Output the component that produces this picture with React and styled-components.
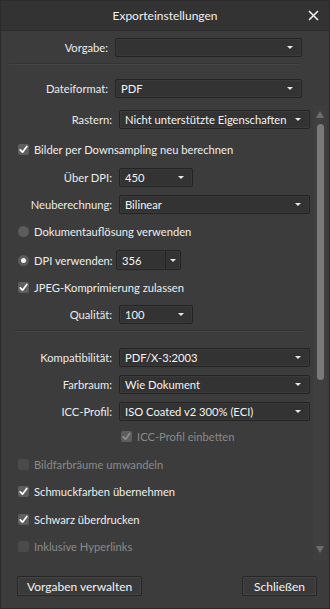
import React from 'react';
import styled, { createGlobalStyle } from 'styled-components';

const Global = createGlobalStyle`
  html, body {
    margin: 0;
    padding: 0;
    background: #3c3c3c;
  }
  body {
    font-family: Lato, "Liberation Sans", sans-serif;
    font-size: 11.2px;
    color: #ededed;
  }
`;

const Window = styled.div`
  width: 330px;
  height: 609px;
  box-sizing: border-box;
  background: #3c3c3c;
  border: 1px solid #2b2b2b;
  display: flex;
  flex-direction: column;
  overflow: hidden;
`;

const TitleBar = styled.div`
  height: 29px;
  flex: none;
  background: #333333;
  border-bottom: 1px solid #2c2c2c;
  position: relative;
  display: flex;
  align-items: center;
  justify-content: center;
  font-size: 12px;
  color: #f0f0f0;
`;

const Close = styled.div`
  position: absolute;
  right: 10px;
  top: 9px;
  width: 11px;
  height: 11px;
  display: flex;
`;

const Top = styled.div`
  flex: none;
  padding: 7px 0 0 0;
  display: flex;
  flex-direction: column;
`;

const Row = styled.div`
  display: grid;
  grid-template-columns: ${p => p.$label}px auto;
  column-gap: 7px;
  align-items: center;
  height: ${p => p.$h || 28}px;
  margin-top: ${p => p.$mt || 0}px;
`;

const Label = styled.div`
  text-align: right;
  white-space: nowrap;
  color: #ebebeb;
`;

const Select = styled.div`
  width: ${p => p.$w}px;
  height: 19px;
  box-sizing: border-box;
  background: #333333;
  border: 1px solid #232323;
  box-shadow: inset 0 0 0 1px #3a3a3a;
  border-radius: 2px;
  display: flex;
  align-items: center;
  padding: 0 8px 0 5px;
  color: #f4f4f4;
  white-space: nowrap;
`;

const Value = styled.span`
  flex: 1;
  overflow: hidden;
`;

const Caret = styled.span`
  width: 0;
  height: 0;
  border-left: 3px solid transparent;
  border-right: 3px solid transparent;
  border-top: 3px solid #e8e8e8;
`;

const Rule = styled.div`
  height: 1px;
  background: #333333;
  border-bottom: 1px solid #444444;
  margin: ${p => p.$m};
`;

const ScrollArea = styled.div`
  flex: none;
  height: 454px;
  margin-top: 8px;
  display: flex;
  overflow: hidden;
`;

const Content = styled.div`
  flex: 1;
  display: flex;
  flex-direction: column;
`;

const ScrollBar = styled.div`
  width: 14px;
  margin-right: 2px;
  background: #3f3f3f;
  display: flex;
  flex-direction: column;
  align-items: center;
  padding-top: 5px;
`;

const Arrow = styled.span`
  width: 0;
  height: 0;
  border-left: 4px solid transparent;
  border-right: 4px solid transparent;
  ${p => (p.$up ? 'border-bottom: 7px solid #6e6e6e;' : 'border-top: 7px solid #6e6e6e;')}
  margin-top: ${p => p.$mt || 0}px;
`;

const Thumb = styled.div`
  width: 7px;
  height: 256px;
  margin-top: 6px;
  background: #7a7a7a;
  border-radius: 4px;
`;

const CheckRow = styled.div`
  display: flex;
  align-items: center;
  gap: 5px;
  height: ${p => p.$h || 28}px;
  margin-top: ${p => p.$mt || 0}px;
  padding-left: ${p => p.$pl || 17}px;
  color: ${p => (p.$disabled ? '#8a8a8a' : '#ededed')};
  white-space: nowrap;
`;

const Box = styled.span`
  width: 11px;
  height: 11px;
  flex: none;
  border-radius: 2px;
  background: ${p => (p.$disabled ? '#4a4a4a' : '#5e5e5e')};
  display: flex;
  align-items: center;
  justify-content: center;
`;

const Radio = styled.span`
  width: 11px;
  height: 11px;
  flex: none;
  border-radius: 50%;
  background: #5c5c5c;
  display: flex;
  align-items: center;
  justify-content: center;
  &::after {
    content: '';
    display: ${p => (p.$on ? 'block' : 'none')};
    width: 5px;
    height: 5px;
    border-radius: 50%;
    background: #f4f4f4;
  }
`;

const RadioValueRow = styled.div`
  display: grid;
  grid-template-columns: 115px auto;
  align-items: center;
  height: 28px;
  margin-top: 3px;
`;

const RadioLabel = styled.div`
  display: flex;
  align-items: center;
  gap: 5px;
  padding-left: 17px;
  white-space: nowrap;
`;

const Spin = styled.div`
  width: 65px;
  height: 20px;
  box-sizing: border-box;
  background: #333333;
  border: 1px solid #232323;
  box-shadow: inset 0 0 0 1px #3a3a3a;
  border-radius: 2px;
  display: flex;
  color: #f4f4f4;
`;

const SpinValue = styled.div`
  flex: 1;
  display: flex;
  align-items: center;
  padding-left: 5px;
  border-right: 1px solid #242424;
`;

const SpinButton = styled.div`
  width: 14px;
  display: flex;
  align-items: center;
  justify-content: center;
`;

const Footer = styled.div`
  flex: 1;
  display: flex;
  justify-content: space-between;
  align-items: flex-start;
  padding: 16px 12px 0 16px;
`;

const Button = styled.div`
  height: 20px;
  box-sizing: border-box;
  padding: 0 ${p => p.$px}px;
  background: #3a3a3a;
  border: 1px solid #262626;
  box-shadow: inset 0 0 0 1px #444;
  border-radius: 2px;
  display: flex;
  align-items: center;
  font-size: 12px;
  color: #f4f4f4;
`;

const Check = ({ disabled }) => (
  <svg width="9" height="9" viewBox="0 0 9 9">
    <path
      d="M1.2 4.8 L3.5 7.2 L7.8 1.4"
      fill="none"
      stroke={disabled ? '#8e8e8e' : '#ffffff'}
      strokeWidth="1.7"
      strokeLinecap="round"
      strokeLinejoin="round"
    />
  </svg>
);

const Dropdown = ({ w, children }) => (
  <Select $w={w}>
    <Value>{children}</Value>
    <Caret />
  </Select>
);

const CheckItem = ({ checked, disabled, pl, h, mt, children }) => (
  <CheckRow $disabled={disabled} $pl={pl} $h={h} $mt={mt}>
    <Box $disabled={disabled && !checked}>{checked && <Check disabled={disabled} />}</Box>
    {children}
  </CheckRow>
);

export default function App() {
  return (
    <>
      <Global />
      <Window>
        <TitleBar>
          Exporteinstellungen
          <Close>
            <svg width="11" height="11" viewBox="0 0 11 11">
              <path d="M1 1 L10 10 M10 1 L1 10" stroke="#f0f0f0" strokeWidth="1.6" />
            </svg>
          </Close>
        </TitleBar>

        <Top>
          <Row $label={107} $h={19}>
            <Label>Vorgabe:</Label>
            <Dropdown w={187} />
          </Row>
          <Rule $m="6px 30px 0 8px" />
          <Row $label={107} $h={19} $mt={14}>
            <Label>Dateiformat:</Label>
            <Dropdown w={187}>PDF</Dropdown>
          </Row>
        </Top>

        <ScrollArea>
          <Content>
            <Row $label={111}>
              <Label>Rastern:</Label>
              <Dropdown w={191}>Nicht unterstützte Eigenschaften</Dropdown>
            </Row>
            <CheckItem checked mt={3}>Bilder per Downsampling neu berechnen</CheckItem>
            <Row $label={111}>
              <Label>Über DPI:</Label>
              <Dropdown w={74}>450</Dropdown>
            </Row>
            <Row $label={111}>
              <Label>Neuberechnung:</Label>
              <Dropdown w={191}>Bilinear</Dropdown>
            </Row>
            <CheckRow $h={24} $mt={2}>
              <Radio />
              Dokumentauflösung verwenden
            </CheckRow>
            <RadioValueRow>
              <RadioLabel>
                <Radio $on />
                DPI verwenden:
              </RadioLabel>
              <Spin>
                <SpinValue>356</SpinValue>
                <SpinButton>
                  <Caret />
                </SpinButton>
              </Spin>
            </RadioValueRow>
            <CheckItem checked>JPEG-Komprimierung zulassen</CheckItem>
            <Row $label={111}>
              <Label>Qualität:</Label>
              <Dropdown w={74}>100</Dropdown>
            </Row>
            <Rule $m="2px 10px 0 12px" />
            <Row $label={111} $mt={11}>
              <Label>Kompatibilität:</Label>
              <Dropdown w={191}>PDF/X-3:2003</Dropdown>
            </Row>
            <Row $label={111}>
              <Label>Farbraum:</Label>
              <Dropdown w={191}>Wie Dokument</Dropdown>
            </Row>
            <Row $label={111} $h={27}>
              <Label>ICC-Profil:</Label>
              <Dropdown w={191}>ISO Coated v2 300% (ECI)</Dropdown>
            </Row>
            <CheckItem checked disabled pl={120} h={24}>ICC-Profil einbetten</CheckItem>
            <CheckItem disabled mt={3}>Bildfarbräume umwandeln</CheckItem>
            <CheckItem checked>Schmuckfarben übernehmen</CheckItem>
            <CheckItem checked>Schwarz überdrucken</CheckItem>
            <CheckItem disabled>Inklusive Hyperlinks</CheckItem>
          </Content>
          <ScrollBar>
            <Arrow $up />
            <Thumb />
            <Arrow $mt={166} />
          </ScrollBar>
        </ScrollArea>

        <Footer>
          <Button $px={9}>Vorgaben verwalten</Button>
          <Button $px={11}>Schließen</Button>
        </Footer>
      </Window>
    </>
  );
}
